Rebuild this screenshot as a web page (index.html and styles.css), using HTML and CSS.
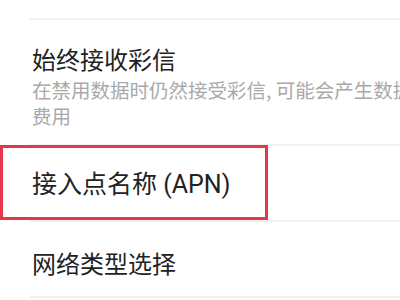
FILE: index.html
```html
<!DOCTYPE html>
<html lang="zh-CN">
<head>
  <meta charset="UTF-8">
  <meta name="viewport" content="width=device-width, initial-scale=1.0">
  <title>移动网络</title>
  <link rel="stylesheet" href="styles.css">
</head>
<body>
  <div class="settings-list">
    <div class="item item-top"></div>
    <div class="item">
      <div class="item-title">始终接收彩信</div>
      <div class="item-summary">在禁用数据时仍然接受彩信, 可能会产生数据费用</div>
    </div>
    <div class="item item-apn">
      <div class="item-title apn-title">接入点名称 (APN)</div>
      <!-- highlight frame -->
      <div class="mark-box"></div>
    </div>
    <div class="item item-single">
      <div class="item-title">网络类型选择</div>
    </div>
  </div>
</body>
</html>
```

FILE: styles.css
```css
body {
  margin: 0;
  background-color: #ffffff;
  font-family: "Noto Sans CJK SC", sans-serif;
  color: #222222;
  overflow: hidden;
  width: 400px;
  height: 300px;
}

.settings-list {
  width: 440px;
}

.item {
  margin-left: 30px;
  padding: 23px 16px 15px 2px;
  border-bottom: 2px solid #f1f1f1;
  position: relative;
}

.item-top {
  height: 18px;
  padding: 0;
}

.item-title {
  font-size: 24px;
  line-height: 32px;
  color: #222222;
}

.item-summary {
  margin-top: 2px;
  font-size: 19.5px;
  line-height: 26px;
  color: #a9a9a9;
}

/* APN row */
.item-apn {
  padding-top: 21px;
  padding-bottom: 17px;
}
.apn-title {
  font-family: Roboto, "Noto Sans CJK SC", sans-serif;
  font-size: 25px;
  line-height: 36px;
}

.item-single {
  padding-top: 25px;
  padding-bottom: 17px;
}

/* Red annotation frame */
.mark-box {
  position: absolute;
  left: -30px;
  top: -1px;
  width: 268px;
  height: 75px;
  box-sizing: border-box;
  border: 3px solid #e5364d;
}
```
